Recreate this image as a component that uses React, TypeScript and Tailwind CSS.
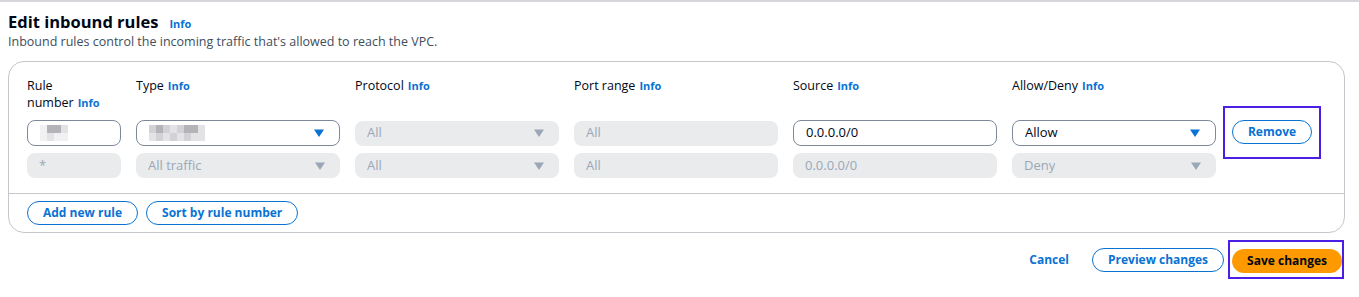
import type React from "react";

const font = { fontFamily: '"Open Sans", "Noto Sans", sans-serif' };

const Info = () => (
  <span className="text-[11px] font-bold text-[#0972d3] ml-1">Info</span>
);

const Caret = ({ disabled }: { disabled?: boolean }) => (
  <svg width="10" height="8" viewBox="0 0 10 8" className="shrink-0">
    <polygon points="0,0.5 10,0.5 5,8" fill={disabled ? "#9ba7b6" : "#0972d3"} />
  </svg>
);

// pixelated "redacted" value
const Blur = ({ cells }: { cells: string[][] }) => (
  <div className="flex flex-col">
    {cells.map((row, i) => (
      <div key={i} className="flex">
        {row.map((c, j) => (
          <div key={j} className="w-[7px] h-[8px]" style={{ background: c }} />
        ))}
      </div>
    ))}
  </div>
);

const Field = ({
  children,
  disabled,
  select,
}: {
  children: React.ReactNode;
  disabled?: boolean;
  select?: boolean;
}) => (
  <div
    className={
      disabled
        ? "h-[25px] rounded-lg bg-[#e9ebed] flex items-center justify-between pl-3 pr-[15px] text-[13px] text-[#9ba7b6]"
        : "h-[26px] rounded-lg border border-[#7d8998] bg-white flex items-center justify-between pl-3 pr-[15px] text-[13px] text-[#000716]"
    }
  >
    <span className="truncate">{children}</span>
    {select && <Caret disabled={disabled} />}
  </div>
);

const Label = ({ children }: { children: React.ReactNode }) => (
  <div className="text-[12.5px] leading-[17px] text-[#000716]">{children}</div>
);

const PillButton = ({ children }: { children: React.ReactNode }) => (
  <button className="h-[24px] rounded-full border border-[#0972d3] px-[15px] text-[12px] font-bold text-[#0972d3] bg-white leading-none">
    {children}
  </button>
);

export default function App() {
  const g1 = "#f1f1f3";
  const g2 = "#b4b4b8";
  const g3 = "#d2d2d6";
  const g4 = "#e3e3e6";
  return (
    <div className="w-[1359px] h-[297px] bg-white border-t-2 border-[#d5d7db]" style={font}>
      <div className="pl-2 pt-[8px]">
        <div className="flex items-baseline">
          <h1 className="text-[16.5px] font-bold text-[#000716] leading-[24px]">Edit inbound rules</h1>
          <span className="text-[11px] font-bold text-[#0972d3] ml-[11px]">Info</span>
        </div>
        <p className="text-[12.5px] text-[#414d5c] leading-[16px]">
          Inbound rules control the incoming traffic that's allowed to reach the VPC.
        </p>
      </div>

      <div className="mx-2 mt-[11px] w-[1337px] rounded-2xl border border-[#c6c6cd]">
        <div className="pl-[18px] pt-[15px] pb-[15px]">
          <div className="grid grid-cols-[94px_204px_204px_204px_204px_204px_auto] gap-x-[15px] gap-y-[7px] items-center">
            <div className="self-start h-[36px]">
              <Label>Rule</Label>
              <Label>
                number<Info />
              </Label>
            </div>
            <div className="self-start"><Label>Type<Info /></Label></div>
            <div className="self-start"><Label>Protocol<Info /></Label></div>
            <div className="self-start"><Label>Port range<Info /></Label></div>
            <div className="self-start"><Label>Source<Info /></Label></div>
            <div className="self-start"><Label>Allow/Deny<Info /></Label></div>
            <div />

            <Field>
              <Blur
                cells={[
                  [g1, g2, g2, g4],
                  [g1, g4, g1, g1],
                ]}
              />
            </Field>
            <Field select>
              <Blur
                cells={[
                  [g3, g2, g3, g4, g3, g2, g2, g4],
                  [g4, g3, g4, g3, g4, g3, g4, g4],
                ]}
              />
            </Field>
            <Field select disabled>All</Field>
            <Field disabled>All</Field>
            <Field>0.0.0.0/0</Field>
            <Field select>Allow</Field>
            <div className="row-span-2 self-start -mt-[14px] -ml-[8px] w-[98px] h-[53px] border-2 border-[#4b1ee6] flex items-center justify-center pb-[2px]">
              <PillButton>Remove</PillButton>
            </div>

            <Field disabled>*</Field>
            <Field select disabled>All traffic</Field>
            <Field select disabled>All</Field>
            <Field disabled>All</Field>
            <Field disabled>0.0.0.0/0</Field>
            <Field select disabled>Deny</Field>
          </div>
        </div>
        <div className="border-t border-[#c6c6cd] pl-[18px] pt-[7px] pb-[7px] flex gap-2">
          <PillButton>Add new rule</PillButton>
          <PillButton>Sort by rule number</PillButton>
        </div>
      </div>

      <div className="flex justify-end items-center pr-[15px] mt-[7px]">
        <button className="text-[12px] font-bold text-[#0972d3] mr-[23px]">Cancel</button>
        <PillButton>Preview changes</PillButton>
        <div className="ml-[4px] border-2 border-[#4b1ee6] p-[5px_0px_4px_2px]">
          <button className="h-[24px] rounded-full bg-[#ff9900] px-[15px] text-[12px] font-bold text-[#000716] leading-none">
            Save changes
          </button>
        </div>
      </div>
    </div>
  );
}
